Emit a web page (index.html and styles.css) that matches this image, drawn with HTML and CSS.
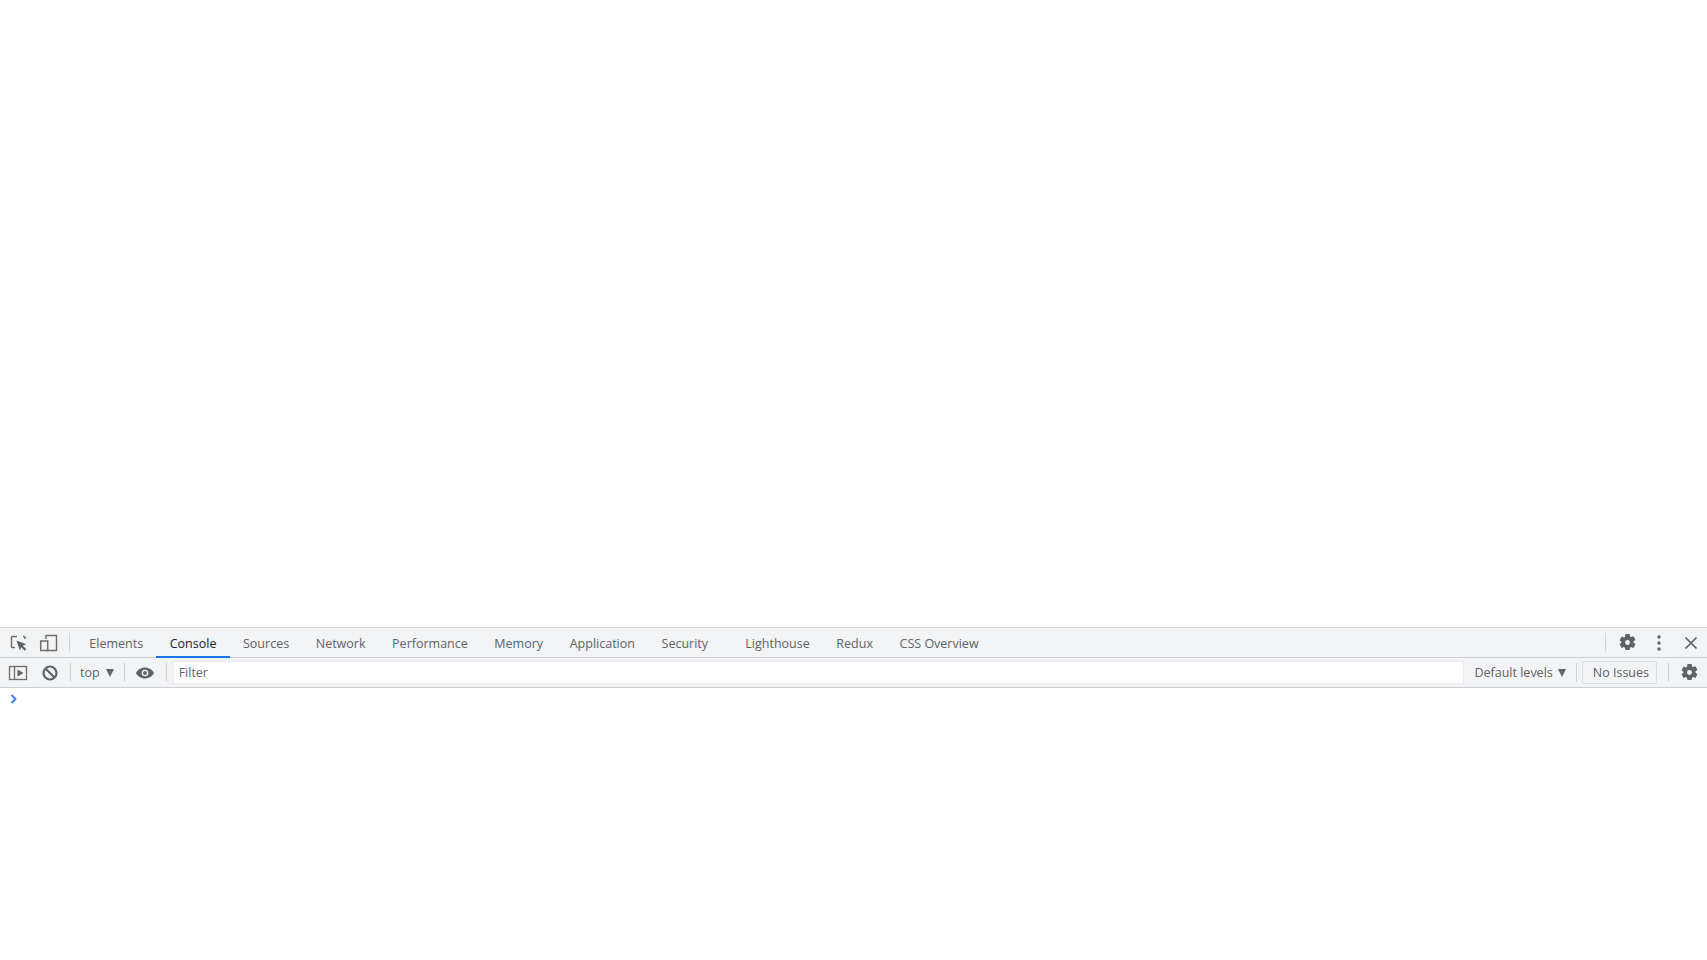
FILE: index.html
```html
<!DOCTYPE html>
<html lang="en">
<head>
  <meta charset="UTF-8" />
  <title>DevTools</title>
  <link rel="stylesheet" href="styles.css">
</head>

<body>

  <!-- PAGE -->
  <div class="page"></div>

  <!-- DEVTOOLS -->
  <div class="devtools">

    <!-- TAB BAR -->
    <div class="tabbar">
      <div class="tool-left">
        <svg class="icon" viewBox="0 0 20 20"><path d="M8 3.500H3.500a1 1 0 0 0-1 1v9a1 1 0 0 0 1 1H6" fill="none" stroke="#6e6e6e" stroke-width="1.500"/><path d="M14 3.500h1a1 1 0 0 1 1 1V6" fill="none" stroke="#6e6e6e" stroke-width="1.500"/><path d="M7.500 7.500l10 3.800-3.800 1.300 3.600 3.600-1.600 1.600-3.600-3.600-1.200 3.600z" fill="#5f6368"/></svg>
        <svg class="icon" viewBox="0 0 20 20"><path d="M7 6V2.500h10.500v15H7" fill="none" stroke="#6e6e6e" stroke-width="1.400"/><rect x="1.700" y="8" width="7" height="9.500" fill="none" stroke="#6e6e6e" stroke-width="1.500"/></svg>
        <span class="sep"></span>
      </div>
      <div class="tabs">
        <a class="tab">Elements</a>
        <a class="tab active">Console</a>
        <a class="tab">Sources</a>
        <a class="tab">Network</a>
        <a class="tab">Performance</a>
        <a class="tab">Memory</a>
        <a class="tab">Application</a>
        <a class="tab tab-wide">Security</a>
        <a class="tab">Lighthouse</a>
        <a class="tab">Redux</a>
        <a class="tab">CSS Overview</a>
      </div>
      <div class="tool-right">
        <span class="sep"></span>
        <svg class="icon gear" viewBox="0 0 20 20"><path fill-rule="evenodd" d="M7.800 1h4.400l.5 2.600 1 .6 2.500-.9 2.200 3.800-2 1.700v1.400l2 1.700-2.200 3.800-2.500-.9-1 .6-.5 2.600H7.800l-.5-2.600-1-.6-2.500.9-2.200-3.800 2-1.700V9.300l-2-1.700 2.200-3.800 2.500.9 1-.6zM10 7.400a2.600 2.600 0 1 0 0 5.200 2.600 2.600 0 0 0 0-5.200z" fill="#5f6368"/></svg>
        <svg class="icon dots" viewBox="0 0 20 20"><circle cx="10" cy="4" r="1.700" fill="#5f6368"/><circle cx="10" cy="10" r="1.700" fill="#5f6368"/><circle cx="10" cy="16" r="1.700" fill="#5f6368"/></svg>
        <svg class="icon close" viewBox="0 0 20 20"><path d="M4.500 4.500l11 11M15.500 4.500l-11 11" stroke="#5f6368" stroke-width="1.700"/></svg>
      </div>
    </div>

    <!-- CONSOLE BAR -->
    <div class="consolebar">
      <svg class="icon sidebar" viewBox="0 0 20 20"><rect x="1.500" y="3.500" width="17" height="13" fill="none" stroke="#6e6e6e" stroke-width="1.300"/><path d="M6.500 3.500v13" stroke="#6e6e6e" stroke-width="1.300"/><path d="M9.500 6.500l6 3.500-6 3.500z" fill="#5f6368"/></svg>
      <svg class="icon clear" viewBox="0 0 20 20"><circle cx="10" cy="10" r="6.500" fill="none" stroke="#5f6368" stroke-width="2.200"/><path d="M5.500 5.500l9 9" stroke="#5f6368" stroke-width="2.200"/></svg>
      <span class="sep"></span>
      <div class="context">top <span class="arrow"></span></div>
      <span class="sep"></span>
      <svg class="icon eye" viewBox="0 0 20 20"><path fill-rule="evenodd" d="M10 4.500c4 0 7.300 2.300 9 5.500-1.700 3.200-5 5.500-9 5.500S2.700 13.200 1 10c1.700-3.200 5-5.500 9-5.500zm0 2.200a3.300 3.300 0 1 0 0 6.600 3.300 3.300 0 0 0 0-6.600zm0 1.400a1.900 1.900 0 1 1 0 3.800 1.900 1.900 0 0 1 0-3.800z" fill="#5f6368"/></svg>
      <span class="sep"></span>
      <input class="filter" type="text" placeholder="Filter" />
      <div class="levels">Default levels <span class="arrow"></span></div>
      <span class="sep"></span>
      <button class="issues">No Issues</button>
      <span class="sep sep-gear"></span>
      <svg class="icon gear" viewBox="0 0 20 20"><path fill-rule="evenodd" d="M7.800 1h4.400l.5 2.600 1 .6 2.500-.9 2.200 3.800-2 1.700v1.400l2 1.700-2.200 3.800-2.500-.9-1 .6-.5 2.600H7.800l-.5-2.600-1-.6-2.500.9-2.200-3.800 2-1.700V9.300l-2-1.700 2.200-3.800 2.500.9 1-.6zM10 7.400a2.600 2.600 0 1 0 0 5.200 2.600 2.600 0 0 0 0-5.200z" fill="#5f6368"/></svg>
    </div>

    <!-- CONSOLE -->
    <div class="prompt">
      <svg class="chevron" viewBox="0 0 8 10"><path d="M1.500 1l4 4-4 4" fill="none" stroke="#367cf1" stroke-width="1.800"/></svg>
    </div>
  </div>

</body>
</html>
```

FILE: styles.css
```css
* {
  box-sizing: border-box;
  font-family: "Open Sans", "Noto Sans", sans-serif;
}

body {
  margin: 0;
  height: 960px;
  overflow: hidden;
  background: #fff;
  display: flex;
  flex-direction: column;
}

.page {
  height: 627px;
  flex: none;
}

.devtools {
  flex: 1;
  display: flex;
  flex-direction: column;
  color: #5f6368;
  font-size: 12.5px;
}

.tabbar {
  height: 31px;
  display: flex;
  align-items: stretch;
  background: #f1f3f4;
  border-top: 1px solid #d4d6d8;
  border-bottom: 1px solid #cdcfd2;
}

.tool-left {
  display: flex;
  align-items: center;
  gap: 10px;
  padding-left: 9px;
  width: 76px;
  flex: none;
}

.icon {
  width: 20px;
  height: 20px;
  flex: none;
}

.sep {
  width: 1px;
  height: 19px;
  background: #cfd1d4;
  flex: none;
}

.tabs {
  display: flex;
  flex: 1;
}

.tab {
  display: flex;
  align-items: center;
  padding: 2px 13.3px 0;
  height: 30px;
  color: #5f6368;
  border-bottom: 2px solid transparent;
  margin-bottom: -1px;
}

.tab.active {
  color: #202124;
  border-bottom-color: #1a73e8;
}

.tab-wide {
  padding-right: 24px;
}

.tool-right {
  display: flex;
  align-items: center;
  gap: 12px;
  padding-right: 6px;
}

.gear {
  width: 19px;
  height: 19px;
}

.consolebar {
  height: 30px;
  display: flex;
  align-items: center;
  background: #f1f3f4;
  border-bottom: 1px solid #cdcfd2;
  padding: 0 8px;
}

.sidebar {
  margin-right: 12px;
}

.clear {
  margin-right: 10px;
}

.context {
  padding: 0 10px 0 9px;
  display: flex;
  align-items: center;
  gap: 6px;
}

.arrow {
  width: 0;
  height: 0;
  border-left: 4.5px solid transparent;
  border-right: 4.5px solid transparent;
  border-top: 8px solid #5f6368;
}

.eye {
  margin: 0 11px 0 10px;
}

.filter {
  flex: 1;
  height: 23px;
  margin-left: 6px;
  border: 1px solid #e8eaed;
  background: #fff;
  padding: 0 5px;
  font-size: 12.5px;
  outline: none;
}

.filter::placeholder {
  color: #5f6368;
}

.levels {
  display: flex;
  align-items: center;
  gap: 5px;
  padding: 0 10px;
}

.issues {
  height: 23px;
  margin-left: 5px;
  padding: 0 7px 0 10px;
  border: 1px solid #dadce0;
  border-radius: 2px;
  background: #f1f3f4;
  color: #5f6368;
  font-size: 12.5px;
}

.sep-gear {
  margin: 0 11px;
}

.prompt {
  flex: 1;
  background: #fff;
  padding: 6px 0 0 10px;
}

.chevron {
  display: block;
  width: 8px;
  height: 10px;
}
```
